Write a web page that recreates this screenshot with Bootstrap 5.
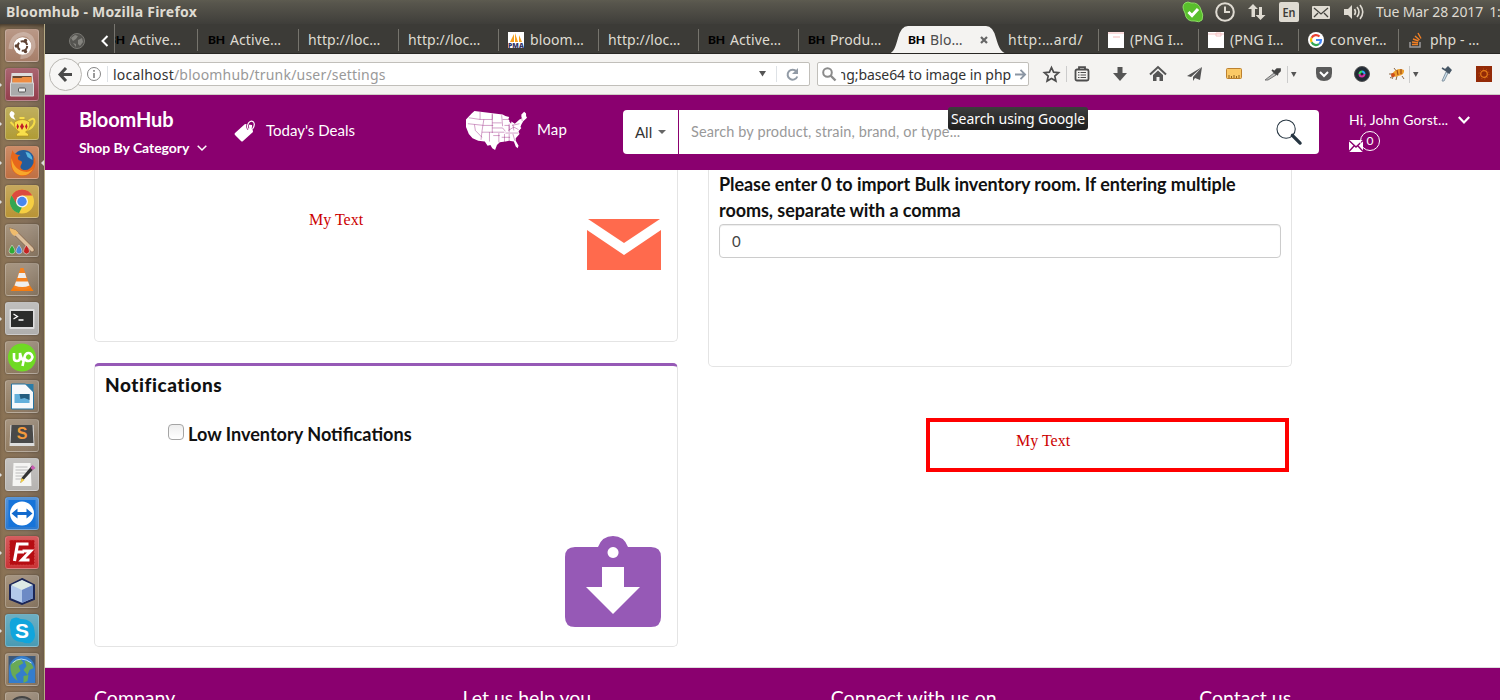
<!DOCTYPE html>
<html lang="en">
<head>
<meta charset="utf-8">
<title>Bloomhub</title>
<link href="https://cdn.jsdelivr.net/npm/bootstrap@5.3.0/dist/css/bootstrap.min.css" rel="stylesheet">
<style>
:root{--plum:#8a006f;--ui:"Noto Sans","Open Sans",sans-serif}
body{width:1500px;height:700px;overflow:hidden;font-family:Lato,sans-serif;background:#fff;color:#111}
svg{display:block;flex:none;overflow:visible}
.ui{font-family:var(--ui)}
.panel{height:24px;background:linear-gradient(#5d5b50,#57554c 15%,#3f3e3a);color:#dfdbd2;font-size:14px;line-height:24px}
.panel .title{font-weight:700;font-size:14px;letter-spacing:.24px;padding-left:6px}
.tray{width:320px;overflow:hidden;white-space:nowrap}
.clock{font-size:14px;letter-spacing:-.12px;margin-left:12px}
.launcher{width:45px;padding:5px 0 0 5px;background:linear-gradient(90deg,#8b7354,#85705a 60%,#74634e);border-right:1px solid #b7ab86;gap:6px;overflow:hidden;box-shadow:inset 0 4px 4px -2px #3f3528}
.tile{width:34px;height:33px;flex:none;border-radius:3px;border:1px solid #ffffff38;background:linear-gradient(#ffffff40,#ffffff12);box-shadow:0 0 2px #0006;position:relative}
.tile svg{width:32px;height:31px}
.tile.run::before{content:"";position:absolute;left:-7px;top:13px;border:3px solid transparent;border-left-color:#ddd;border-right:0}
.tile.focus::after{content:"";position:absolute;left:35px;top:13px;border:3px solid transparent;border-right-color:#ddd;border-left:0}
.tabs{height:30px;background:#3c3b37;border-bottom:1px solid #282724;color:#dfdbd2;font-size:14px}
.tab-item{width:100px;flex:none;height:29px;display:flex;align-items:center;padding:2px 0 0 10px;gap:6px;white-space:nowrap;position:relative;letter-spacing:.1px}
.tab-item.sep::after{content:"";position:absolute;right:-1px;top:5px;height:22px;border-right:1px solid #76746d}
.tab-item.first{width:84px;justify-content:flex-end;padding-left:0;padding-right:17px;overflow:hidden;border-left:1px solid #77756f}
.tab-item.first::after{right:0}
.bh{font:900 12px/16px Lato,sans-serif;color:#000;width:16px;letter-spacing:-.2px;flex:none}
.tab-item.on{color:#4c4c4c;z-index:1}
.tab-item.on>.shape{position:absolute;left:-12px;top:2px;z-index:-1}
.bar{height:41px;background:#f4f3f1;border-bottom:1px solid #cfccc6;font-size:14px;overflow:hidden}
.bar>*{flex-shrink:0}
.field{height:24px;border:1px solid #c1bfba;background:#fff;border-radius:2px;color:#333;white-space:nowrap;overflow:hidden}
.url{width:732px;margin-left:-4px}
.back{width:33px;height:33px;border:1px solid #b9b7b2;border-radius:50%;background:#f7f6f5;margin-left:4px;z-index:1}
.tools{display:grid;grid-template-columns:20px 42px 34px 42px 32px 46px 30px 22px 30px 46px 24px 24px 26px 50px;justify-items:center;align-items:center;margin-left:12px;height:40px}
.site-head{height:75px;background:var(--plum);color:#fff}
.brand{width:156px;padding:12px 0 0 34px;white-space:nowrap}
.brand b{display:block;font-size:20px;line-height:25px;font-weight:700;letter-spacing:-.1px}
.brand span{font-size:14px;font-weight:700;line-height:32px;letter-spacing:-.06px}
.finder{width:696px;height:44px;background:#fff;border-radius:4px;color:#333;font-size:15px}
.finder .all{width:56px;border-right:1px solid var(--plum);height:44px}
.tip{position:absolute;left:948px;top:107px;width:140px;height:23px;border-radius:3px;background:linear-gradient(#3d3d3d,#1e1e1e);color:#fff;font-size:14px;line-height:23px;text-align:center;white-space:nowrap;letter-spacing:-.05px}
.content-area{height:497px;padding-left:49px;gap:30px;overflow:hidden}
.colm{width:584px}
.panel-box{border:1px solid #e4e4e4;border-radius:5px;background:#fff}
.clipped{border-top:0;border-radius:0 0 5px 5px}
.notify{border-top:3px solid #9659b6}
.serif{font:16px/18px "Liberation Serif",serif;color:#c00}
.ask{font-size:18px;line-height:26px;font-weight:700}
.redbox{width:363px;height:54px;border:4px solid #f00}
.box-in{height:34px;border:1px solid #ccc;border-radius:4px;box-shadow:inset 0 1px 1px #00000013;font-size:15px;color:#444;line-height:33px}
.foot{height:33px;background:var(--plum);border-top:1px solid #ddd;color:#fff;font-size:19.500px;line-height:24px;padding:18px 0 0 49px;overflow:hidden}
.foot div{width:368.400px;flex:none}
.chk{width:16px;height:16px;border:1px solid #a5a5a5;border-radius:4px;background:linear-gradient(#eee,#fff)}
</style>
</head>
<body>
<div class="panel ui d-flex justify-content-between">
  <div class="title">Bloomhub - Mozilla Firefox</div>
  <div class="tray d-flex align-items-center">
    <svg width="22" height="22" viewBox="0 0 22 22" style="margin-left:2px"><path d="M3 2Q6 0 9 2Q17 1 19 9Q22 14 20 19Q17 22 13 20Q4 21 3 12Q-1 5 3 2Z" fill="#59bf2c" stroke="#8bdc62"/><path d="M6.500 11l3.500 3.500 6-6.500" fill="none" stroke="#fff" stroke-width="3"/></svg>
    <svg width="20" height="20" viewBox="0 0 20 20" style="margin-left:11px"><circle cx="10" cy="10" r="8.800" fill="none" stroke="#dfdbd2" stroke-width="2"/><path d="M10 4.500V10h5" fill="none" stroke="#dfdbd2" stroke-width="2"/></svg>
    <svg width="18" height="18" viewBox="0 0 18 18" style="margin-left:13px" fill="#dfdbd2"><path d="M5 1l5 5H7v8H3.500V6H0zM12.500 17l5-5H14V4h-3v8H7.500z"/></svg>
    <svg width="20" height="20" viewBox="0 0 20 20" style="margin-left:13px"><rect width="20" height="20" rx="2" fill="#dfdbd2"/><text x="3.500" y="15" font-size="12.500" font-weight="600" fill="#3d3c38" textLength="13" lengthAdjust="spacingAndGlyphs">En</text></svg>
    <svg width="18" height="13" viewBox="0 0 18 13" style="margin-left:13px"><rect width="18" height="13" rx="1" fill="#dfdbd2"/><path d="M2 2l7 6 7-6M2 11l4-4M16 11l-4-4" fill="none" stroke="#44433e" stroke-width="1.300"/></svg>
    <svg width="20" height="18" viewBox="0 0 20 18" style="margin-left:14px"><path d="M0 6h4l4-4v14l-4-4H0z" fill="#dfdbd2"/><path d="M10.500 6q2 3 0 6M13 4q4 5 0 10M16 2q5.500 7 0 14" fill="none" stroke="#dfdbd2" stroke-width="1.600"/></svg>
    <span class="clock">Tue Mar 28 2017<span style="margin-left:6px">1:</span></span>
  </div>
</div>
<div class="d-flex" style="height:676px">
  <nav class="launcher d-flex flex-column flex-shrink-0">
    <div class="tile" style="background-color:#a1755e"><svg viewBox="0 0 31 31"><path d="M4 19Q5 5 17 4Q27 5 27 17Q23 28 14 27" fill="none" stroke="#fff4" stroke-width="4"/><circle cx="16" cy="16" r="8.800" fill="#fff"/><circle cx="16" cy="16" r="4.700" fill="none" stroke="#5d4132" stroke-width="2" stroke-dasharray="8 1.840"/><g fill="#5d4132"><circle cx="9.800" cy="16" r="1.700"/><circle cx="19" cy="10.500" r="1.700"/><circle cx="19" cy="21.500" r="1.700"/></g></svg></div>
    <div class="tile run" style="background-color:#8c3040"><svg viewBox="0 0 31 31"><path d="M5 4h21l1 11H4z" fill="#ddd"/><path d="M6 7h19v7H6z" fill="#67462f"/><path d="M6 9h9l1-1h9v6H6z" fill="#ee8c42"/><path d="M4 14h23v13H4z" fill="#aaa" stroke="#d8d8d8"/><rect x="12" y="19" width="7" height="4" rx="1" fill="#eee" stroke="#555"/></svg></div>
    <div class="tile run" style="background-color:#aa9427"><svg viewBox="0 0 31 31"><path d="M5 10q-4-4 0-7 5 2 2 5l2 4" fill="#fff"/><path d="M22 13q6-5 6 1-1 6-8 8M9 19l-5-5" fill="none" stroke="#f5dc48" stroke-width="2"/><path d="M8 14q8-5 15 0 1 7-4 10l3 2v2H10v-2l3-2q-6-3-5-10z" fill="#f8df4b" stroke="#b38c16" stroke-width=".6"/><path d="M13 9h5v2h-5z" fill="#f8df4b"/><g fill="#c21f27"><path d="M11 15.500l1.500 3-1.500 3-1-3zM15.500 15l2 3.500-2 3.500-2-3.500zM20 15.500l1 3-1 3-1.500-3z"/></g></svg></div>
    <div class="tile run focus" style="background-color:#bb6534"><svg viewBox="0 0 31 31"><circle cx="17" cy="14" r="11" fill="#235d9d"/><path d="M19 5q6 0 7 8l-5-3z" fill="#58b5df"/><path d="M6 3q1 5 8 5-4 2-2 5 5 1 3 4-3 4 2 6 7 1 10-7V9q4 7 0 14-5 7-13 6Q4 26 4 15q0-7 2-12z" fill="#e7671b"/><path d="M5 11q3 13 15 14 5-1 7-4-5 9-14 7Q4 25 5 11z" fill="#f8a72b"/></svg></div>
    <div class="tile run" style="background-color:#b48c27"><svg viewBox="0 0 31 31"><circle cx="15.500" cy="15.500" r="12" fill="#f6ce42"/><path d="M5.100 9.500A12 12 0 0 1 25.900 9.500H15.500L10 18.500z" fill="#dc4b3e"/><path d="M5.100 9.500L10.500 18.500 15.500 21l-3 6.300A12 12 0 0 1 5.100 9.500z" fill="#33a653"/><circle cx="15.500" cy="15.500" r="6" fill="#f5f5f5"/><circle cx="15.500" cy="15.500" r="4.700" fill="#4a87ee"/></svg></div>
    <div class="tile"><svg viewBox="0 0 31 31"><path d="M3 3l6 2 18 18q2 4-2 4L9 11q-4-2-6-8z" fill="#dcc09d" stroke="#6d4a30" stroke-width=".6"/><path d="M3 3l6 2 3 3-4 3q-4-2-5-8z" fill="#efbc6d"/><g stroke="#eee" stroke-width=".5"><path d="M5.500 20q6 8 0 9-6-1 0-9z" fill="#2eaa34"/><path d="M12.500 20q6 8 0 9-6-1 0-9z" fill="#4a86d8"/><path d="M20 20q6 8 0 9-6-1 0-9z" fill="#c42222"/></g></svg></div>
    <div class="tile"><svg viewBox="0 0 31 31"><path d="M8 21h15l4 6H4z" fill="#f47c10"/><path d="M14 4h3l7 20q-8 4-17 0z" fill="#f58220"/><path d="M12.500 9h6l1.500 5h-9zM9.500 17.500h12l1.500 4q-7 3-15 0z" fill="#eee"/></svg></div>
    <div class="tile run" style="background-color:#aaa9a7"><svg viewBox="0 0 31 31"><rect x="3" y="6" width="25" height="20" rx="1" fill="#dedede"/><rect x="4.500" y="8" width="22" height="16" fill="#2b2c2b"/><path d="M7 11l4 2.500L7 16M12 17h5" fill="none" stroke="#fff" stroke-width="1.300"/></svg></div>
    <div class="tile"><svg viewBox="0 0 31 31"><circle cx="15.500" cy="15.500" r="14" fill="#6fda24"/><path d="M7.500 11v5q0 3 3 3t3-3v-5q1 6 4 8M16 24l2-9q1-4 4-4t4 4q-1 4-4 4-3 0-4-3" fill="none" stroke="#fff" stroke-width="2.600"/></svg></div>
    <div class="tile"><svg viewBox="0 0 31 31"><path d="M5 3h14l8 8v17H5z" fill="#f7f9fb" stroke="#2574a3"/><path d="M19 3h8v8z" fill="#2a7ca8"/><path d="M8 13h15v9H8z" fill="#64b0db"/><path d="M13 13h10v6l-5-2-4 1z" fill="#245d7f"/></svg></div>
    <div class="tile"><svg viewBox="0 0 31 31"><path d="M4 5h23l1 21H3z" fill="#ddd"/><path d="M5 5h21l1 18H4z" fill="#494949"/><text x="15.500" y="19" font-family="Liberation Sans" font-weight="700" font-size="16" text-anchor="middle" fill="#f39a3d">S</text></svg></div>
    <div class="tile run" style="background-color:#b0aeab"><svg viewBox="0 0 31 31"><path d="M7 4h17l1 23H6z" fill="#f5f5f3"/><path d="M9 8h12M9 11h13M9 14h11M9 17h9M9 20h6" stroke="#bbb"/><path d="M28 9l-11 12-3 3 1-5L25 7z" fill="#333"/><path d="M26 6l3 3-3 2-2-2z" fill="#ca5bb2"/><path d="M15 19l3 2-4 3z" fill="#f3ce42"/></svg></div>
    <div class="tile" style="background-color:#1c6fca"><svg viewBox="0 0 31 31"><path d="M2 2h27v27H2z" fill="#1674da"/><circle cx="15.500" cy="15.500" r="12" fill="#fff"/><path d="M5 15.500l6-5v3.500h9v-3.500l6 5-6 5V17h-9v3.500z" fill="#116ace"/></svg></div>
    <div class="tile run" style="background-color:#c52527"><svg viewBox="0 0 31 31"><path d="M3 3h25v25H3z" fill="#b60d12" stroke="#d84a4a" stroke-width=".7" stroke-dasharray="2 1"/><path d="M8 24L11 7h11M9.500 15h8M16 14h8l-8.500 9H23" fill="none" stroke="#fff" stroke-width="3.200"/></svg></div>
    <div class="tile"><svg viewBox="0 0 31 31"><path d="M15.500 3l12 6v14l-12 5-12-5V9z" fill="#b3c9ea" stroke="#1b2657" stroke-width="2"/><path d="M15.500 4l11 5-11 5-11-5z" fill="#deebe5"/><path d="M15.500 14l11-5v13l-11 5z" fill="#6d8ac5"/></svg></div>
    <div class="tile run" style="background-color:#3c94ae"><svg viewBox="0 0 31 31"><path d="M5 4q5-3 9 0 13 0 14 12 2 8-4 12-5 1-8-1Q4 27 4 15 2 9 5 4z" fill="#10a5dc"/><text x="15.500" y="23" font-family="Liberation Sans" font-weight="700" font-size="21" text-anchor="middle" fill="#fff">S</text></svg></div>
    <div class="tile"><svg viewBox="0 0 31 31"><path d="M2 2h27v27H2z" fill="#3e5877"/><path d="M2.500 29V15a13 13 0 0 1 26 0v14z" fill="#347dcc"/><path d="M4 11q4-6 10-6l3 4-5 3 2 5-5 4 2 6q-8-5-7-16zM18 7q7 0 9 7l-4 2-2 5-4-5 3-4zM17 22l5-1-1 6-4 2z" fill="#69aa55"/><path d="M6 9q8-8 19 0" stroke="#b5def7" fill="none"/></svg></div>
    <div class="tile"><svg viewBox="0 0 31 31"><circle cx="15.500" cy="17" r="13" fill="#777" stroke="#444" stroke-width="2"/><circle cx="15.500" cy="17" r="8" fill="#bbb"/></svg></div>
  </nav>
  <div class="flex-grow-1" style="min-width:0">
    <div class="tabs ui d-flex overflow-hidden">
      <div class="d-flex align-items-center pt-1 flex-shrink-0" style="width:69px;padding-left:24px">
        <svg width="16" height="16" viewBox="0 0 16 16"><circle cx="8" cy="8" r="7.500" fill="#555450" stroke="#7a7974"/><path d="M2 5l4-3 3 1-2 3-3 2zM9 7l4-2 1 4-3 4-2-2zM4 10l3 1v3z" fill="#85847f"/></svg>
        <svg width="8" height="12" viewBox="0 0 8 12" style="margin-left:16px"><path d="M6.500 1L1.500 6l5 5" fill="none" stroke="#fff" stroke-width="2"/></svg>
      </div>
      <div class="tab-item first sep"><span class="bh">BH</span><span>Active…</span></div>
      <div class="tab-item sep"><span class="bh">BH</span><span>Active…</span></div>
      <div class="tab-item sep"><span>http://loc…</span></div>
      <div class="tab-item sep"><span>http://loc…</span></div>
      <div class="tab-item sep"><svg width="16" height="16" viewBox="0 0 16 16"><path d="M0 0h16v16H0z" fill="#fff"/><path d="M2 10l4-8v8zM7 10V1l3 9zM11 10V3l3 7z" fill="#f5a01c"/><text x="0" y="16" font-size="6.500" font-weight="900" fill="#333366" textLength="16" lengthAdjust="spacingAndGlyphs">PMA</text></svg><span>bloom…</span></div>
      <div class="tab-item sep"><span>http://loc…</span></div>
      <div class="tab-item sep"><span class="bh">BH</span><span>Active…</span></div>
      <div class="tab-item"><span class="bh">BH</span><span>Produ…</span></div>
      <div class="tab-item on"><svg class="shape" width="124" height="28" viewBox="0 0 124 28"><path d="M0 28C8 28 9 22 12 12Q15 0 22 0H100Q107 0 110 12C113 22 115 28 124 28Z" fill="#f4f3f1"/></svg><span class="bh">BH</span><span>Blo…</span><svg width="8" height="8" viewBox="0 0 8 8" style="margin-left:11px"><path d="M1 1l6 6M7 1L1 7" stroke="#666" stroke-width="2.200"/></svg></div>
      <div class="tab-item sep" style="letter-spacing:.6px"><span>http:…ard/</span></div>
      <div class="tab-item sep"><svg width="16" height="16" viewBox="0 0 16 16"><path d="M0 0h16v16H0z" fill="#fff"/><path d="M0 1h16M5 5h7" stroke="#f4b8b8"/></svg><span>(PNG I…</span></div>
      <div class="tab-item sep"><svg width="16" height="16" viewBox="0 0 16 16"><path d="M0 0h16v16H0z" fill="#fff"/><path d="M0 2h16M8 1h5v3H8z" stroke="#f4c3c3" fill="none"/></svg><span>(PNG I…</span></div>
      <div class="tab-item sep"><svg width="16" height="16" viewBox="0 0 16 16"><circle cx="8" cy="8" r="8" fill="#fff"/><g fill="none" stroke-width="2.200"><path d="M11.500 4.500A5 5 0 0 0 3.600 5.700" stroke="#ea4335"/><path d="M3.600 5.700a5 5 0 0 0 0 4.600" stroke="#fbbc05"/><path d="M3.600 10.300a5 5 0 0 0 7.500 1.700" stroke="#34a853"/><path d="M11.100 12A5 5 0 0 0 13 8H8" stroke="#4285f4"/></g></svg><span style="letter-spacing:.5px">conver…</span></div>
      <div class="tab-item"><svg width="16" height="16" viewBox="0 0 16 16"><path d="M2 10v5h10v-5" fill="none" stroke="#9a9b9c" stroke-width="1.500"/><path d="M4 12.500h6M4 10l6 .8M5 7l5.500 2M7 4l4.500 4M10 1l3 5.500" stroke="#f48024" stroke-width="1.400"/></svg><span>php - …</span></div>
    </div>
    <div class="bar ui d-flex align-items-center">
      <div class="back d-flex align-items-center justify-content-center"><svg width="15" height="15" viewBox="0 0 15 15"><path d="M8 1L2 7.500 8 14M2.500 7.500H14" fill="none" stroke="#4a4a4a" stroke-width="3"/></svg></div>
      <div class="field url d-flex align-items-center">
        <svg width="14" height="14" viewBox="0 0 14 14" style="margin-left:8px"><circle cx="7" cy="7" r="6.500" fill="none" stroke="#858585"/><path d="M7 6v5M7 3v1.700" stroke="#777" stroke-width="1.500"/></svg>
        <span class="border-start" style="height:16px;margin:0 5px 0 6px"></span>
        <span style="letter-spacing:.2px">localhost<span style="color:#999">/bloomhub/trunk/user/settings</span></span>
        <svg class="ms-auto" width="7" height="6" viewBox="0 0 7 6"><path d="M0 0h7L3.500 5.500z" fill="#555"/></svg>
        <span class="border-start" style="height:16px;margin:0 9px 0 10px"></span>
        <svg width="13" height="13" viewBox="0 0 13 13" style="margin-right:10px"><path d="M10.500 3.500A5 5 0 1 0 11.300 8.500" fill="none" stroke="#929ba6" stroke-width="2"/><path d="M12 0v6H6z" fill="#929ba6"/></svg>
      </div>
      <div class="field d-flex align-items-center" style="width:212px;margin-left:7px">
        <svg width="15" height="15" viewBox="0 0 15 15" style="margin-left:4px"><circle cx="5.500" cy="5.500" r="4.300" fill="none" stroke="#8b8b8b" stroke-width="2"/><path d="M8.500 8.500l5 5" stroke="#8b8b8b" stroke-width="2.400"/></svg>
        <div class="d-flex justify-content-end overflow-hidden" style="width:170px;margin-left:4px;letter-spacing:-.08px">ng;base64 to image in php</div>
        <svg width="11" height="11" viewBox="0 0 12 12" style="margin-left:4px"><path d="M0 6h10M6 1l5 5-5 5" fill="none" stroke="#8b96a3" stroke-width="2"/></svg>
      </div>
      <div class="tools">
        <svg width="17" height="17" viewBox="0 0 17 17"><path d="M8.500 1.500l2.100 4.700 5 .5-3.800 3.400 1.100 5-4.400-2.600-4.400 2.600 1.100-5L1.400 6.700l5-.5z" fill="none" stroke="#4d4d4d" stroke-width="1.700"/></svg>
        <svg width="16" height="16" viewBox="0 0 16 16"><path d="M-7.500 0v16" stroke="#ccc"/><path d="M5 3V1.200h6V3" fill="none" stroke="#4d4d4d" stroke-width="1.800"/><rect x="1.500" y="3.500" width="13" height="11" rx="1.500" fill="none" stroke="#4d4d4d" stroke-width="1.800"/><path d="M4 6.500h1.500M6.500 6.500H12M4 9h1.500M6.500 9H12M4 11.500h1.500M6.500 11.500H12" stroke="#4d4d4d" stroke-width="1.200"/></svg>
        <svg width="16" height="16" viewBox="0 0 16 16"><path d="M5.500 1h5v6H15l-7 8-7-8h4.500z" fill="#555"/></svg>
        <svg width="16" height="16" viewBox="0 0 16 16"><path d="M0 8.500L8 1l8 7.500" fill="none" stroke="#555" stroke-width="2"/><path d="M3 9l5-4.500L13 9v6h-3.500v-4h-3v4H3z" fill="#555"/></svg>
        <svg width="16" height="16" viewBox="0 0 16 16"><path d="M15 1L0 10l4 1zM15 1L6 11v4l2-3 5 2z" fill="#555"/></svg>
        <svg width="16" height="15" viewBox="0 0 16 15"><rect x=".5" y="1.500" width="15" height="10" rx="1" fill="#fbc966" stroke="#bc8130"/><path d="M3 11V8M5.500 11V9M8 11V8M10.500 11V9M13 11V8" stroke="#8e601f"/></svg>
        <svg width="17" height="15" viewBox="0 0 17 15"><path d="M1 13l9-7 2 2-8 5z" fill="#bbb" stroke="#777"/><path d="M8 3l6 5M10 5l3-3h3v2l-3 3z" fill="#444" stroke="#444" stroke-width="1.700"/></svg>
        <svg width="22" height="17" viewBox="0 0 22 17"><path d="M.5 0v17" stroke="#ccc"/><path d="M4 6h5.500L6.800 11z" fill="#555"/></svg>
        <svg width="16" height="14" viewBox="0 0 16 14"><path d="M1.500 0h13Q16 0 16 2v4q0 8-8 8T0 6V2Q0 0 1.500 0z" fill="#5a5a5a"/><path d="M4 5l4 4 4-4" fill="none" stroke="#fff" stroke-width="2"/></svg>
        <svg width="16" height="16" viewBox="0 0 16 16"><circle cx="8" cy="8" r="7.500" fill="#222b35" stroke="#555"/><path d="M5.500 8A2.500 2.500 0 0 1 8 5.500" stroke="#35df60" stroke-width="2" fill="none"/><path d="M8 5.500A2.500 2.500 0 0 1 10.500 8" stroke="#2ba6f5" stroke-width="2" fill="none"/><path d="M10.500 8a2.500 2.500 0 0 1-5 0" stroke="#d733a3" stroke-width="2" fill="none"/></svg>
        <svg width="16" height="14" viewBox="0 0 16 14"><path d="M3 12l2-4M7 13l1-4M0 7h4M5 1l3 4M13 9l2 3M1 11l3-2" stroke="#70451d" stroke-width=".8"/><path d="M3 7q5-7 12-4 1 5-6 6-5 2-6-2z" fill="#eea22e"/><path d="M8 3l1 5M12 2v5" stroke="#a14b16" stroke-width="1.200"/><circle cx="4" cy="8" r="2" fill="#cf4f1b"/></svg>
        <svg width="24" height="17" viewBox="0 0 24 17"><path d="M.5 0v17" stroke="#ccc"/><path d="M4 6h5.500L6.800 11z" fill="#555"/></svg>
        <svg width="12" height="17" viewBox="0 0 12 17"><path d="M2 15L6 6l2 1-4 8z" fill="#cde1ef" stroke="#8495a2"/><path d="M2 2l8 5M5 4l3-3 3 3-2 3z" fill="#475766" stroke="#475766" stroke-width="1.500"/></svg>
        <svg width="16" height="16" viewBox="0 0 16 16"><path d="M0 0h16v16H0z" fill="#932a07"/><circle cx="8" cy="8" r="3.300" fill="none" stroke="#e77b19" stroke-width="1.200"/><circle cx="8" cy="8" r="5" fill="none" stroke="#c95c10" stroke-dasharray="1 2.140"/></svg>
      </div>
    </div>
    <header class="site-head d-flex">
      <div class="brand flex-shrink-0"><b>BloomHub</b><span class="d-flex align-items-center">Shop By Category<svg width="10" height="6" viewBox="0 0 10 6" style="margin-left:8px"><path d="M.7.700L5 5 9.300.700" fill="none" stroke="#fff" stroke-width="1.500"/></svg></span></div>
      <div class="d-flex align-items-center flex-shrink-0" style="width:265px;font-size:15px;padding:0 0 4px 33px">
        <svg width="22" height="22" viewBox="0 0 22 22"><path d="M1 13L11 4l7 1 1 7-10 9q-1 1-2 0l-6-6q-1-1 0-2z" fill="#fff"/><path d="M14.500 9q-2-2 0-6 2-3 5-1 2 3-1 7" fill="none" stroke="var(--plum)" stroke-width="2.600"/><path d="M14.500 9q-2-2 0-6 2-3 5-1 2 3-1 7" fill="none" stroke="#fff" stroke-width="1.200"/></svg>
        <span style="margin-left:10px">Today's Deals</span>
      </div>
      <div class="d-flex align-items-center flex-shrink-0" style="width:157px;font-size:15px;padding-bottom:5px">
        <svg width="61" height="39" viewBox="-2 0 65 46" preserveAspectRatio="none"><path d="M4 3l3-3 30 4 3 2 4 1-1 3 3 2 4 3 5-5 2-1V4l3-3 2 2v3l1 2-4 4-2 4-1 3 1 1-3 4 1 3-4 5 0 3 3 6-1 3-2-2-2-6-5-1-4 1-6 1-3 3-2 6-3-2-2-4-3 1-3-5-7-1-6-3-4-5-3-8V10z" fill="#fff"/><path d="M1 8l12 2V1M0 15l17 2M17 10l-2 14M7 16l1 7 7 8M15 24l-1 10M13 10h13V3M17 17h10M26 4v22M15 25h24M26 14h10M36 5l1 13M26 20h11l3 4M33 26v11M23 25v11M27 29h7M37 10h6M39 17h5v8M44 15v8M48 16l1 7M40 26h14M36 31h9M39 27v11M44 27v9M48 27l2 8M43 23l6-4 5 3M47 17l8-2M57 7l1 5" fill="none" stroke="var(--plum)" stroke-width=".7" opacity=".6"/><path d="M44 12l1-3 2 1-1 5z" fill="var(--plum)"/></svg>
        <span style="margin-left:10px;padding-bottom:1px;letter-spacing:.15px">Map</span>
      </div>
      <div class="finder d-flex align-items-center flex-shrink-0" style="margin-top:15px">
        <div class="all d-flex align-items-center" style="padding-left:12px">All<svg width="8" height="4" viewBox="0 0 8 4" style="margin-left:6px"><path d="M0 0h8L4 4z" fill="#666"/></svg></div>
        <span style="padding-left:12px;color:#999;font-size:14.500px;letter-spacing:.13px">Search by product, strain, brand, or type...</span>
        <svg class="ms-auto" width="26" height="26" viewBox="0 0 27 27" style="margin-right:17px"><circle cx="10.500" cy="10.500" r="9.500" fill="none" stroke="#263541" stroke-width="1.100"/><path d="M17 17l8 8" stroke="#263541" stroke-width="3.500" stroke-linecap="round"/></svg>
      </div>
      <div style="padding:15px 0 0 30px">
        <div class="d-flex align-items-center text-nowrap" style="font-size:14px;line-height:20px;letter-spacing:.12px">Hi, John Gorst...<svg width="12" height="8" viewBox="0 0 12 8" style="margin-left:10px"><path d="M.8 1L6 6.500 11.200 1" fill="none" stroke="#fff" stroke-width="2.200"/></svg></div>
        <div class="d-flex align-items-end"><svg width="14" height="12" viewBox="0 0 14 12" style="margin-bottom:-1px"><path d="M0 0h14v12H0z" fill="#fff"/><path d="M0 .5L7 7l7-6.500M0 11.500l5-5.500M14 11.500L9 6" fill="none" stroke="var(--plum)" stroke-width="1.400"/></svg><span class="border border-white rounded-circle text-center" style="width:20px;height:20px;font-size:12px;line-height:18px;margin:1px 0 0 -3px">0</span></div>
      </div>
    </header>
    <main class="content-area d-flex">
      <div class="colm">
        <div class="panel-box clipped d-flex justify-content-between" style="height:172px;padding:0 16px 0 214px">
          <span class="serif" style="padding-top:41px">My Text</span>
          <svg width="74" height="51" viewBox="0 0 74 51" style="margin-top:49px"><path d="M1 0h72L37 24zM0 11l37 25 37-25v40H0z" fill="#ff6a4d"/></svg>
        </div>
        <div class="panel-box notify d-flex flex-column" style="height:284px;margin-top:21px;padding:7px 16px 19px 10px">
          <div style="font-size:19px;line-height:24px;font-weight:900;letter-spacing:.55px">Notifications</div>
          <div class="d-flex ask" style="padding:24px 0 0 63px"><span class="chk" style="margin:3px 4px 0 0"></span><span style="font-size:18.100px">Low Inventory Notifications</span></div>
          <svg class="mt-auto ms-auto" width="96" height="91" viewBox="0 0 96 91"><path fill-rule="evenodd" d="M10 11h23q4-11 15-11t15 11h23q10 0 10 10v60q0 10-10 10H10Q0 91 0 81V21Q0 11 10 11zM48 11a5.500 5.500 0 1 0 .1 0zM37 31v20H21l27 27 27-27H59V31z" fill="#9659b6"/></svg>
        </div>
      </div>
      <div class="colm">
        <div class="panel-box clipped" style="height:197px;padding:1px 10px">
          <div class="ask" style="font-size:18px;letter-spacing:-.06px;margin-bottom:1px;font-variant-ligatures:none">Please enter 0 to import Bulk inventory room. If entering multiple<br>rooms, separate with a comma</div>
          <div class="box-in" style="padding-left:12px">0</div>
        </div>
        <div class="redbox" style="margin:51px 0 0 218px;padding:10px 0 0 86px"><div class="serif">My Text</div></div>
      </div>
    </main>
    <footer class="foot d-flex"><div>Company</div><div>Let us help you</div><div>Connect with us on</div><div>Contact us</div></footer>
  </div>
</div>
<div class="tip ui">Search using Google</div>
<script src="https://cdn.jsdelivr.net/npm/bootstrap@5.3.0/dist/js/bootstrap.bundle.min.js"></script>
</body>
</html>
